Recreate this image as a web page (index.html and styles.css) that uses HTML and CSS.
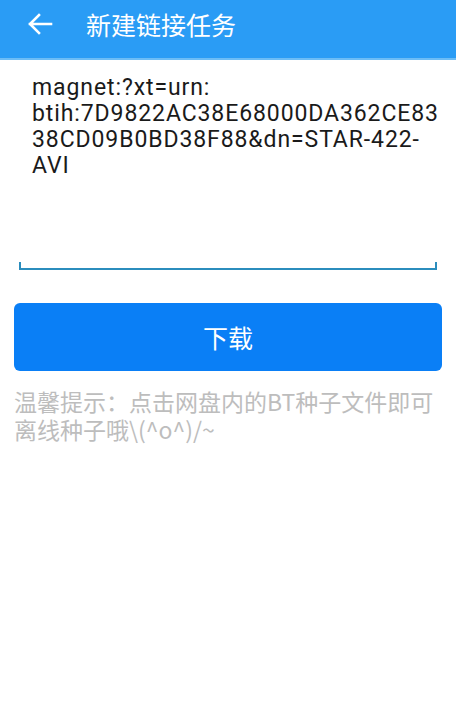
FILE: index.html
```html
<!DOCTYPE html>
<html lang="zh-CN">
<head>
<meta charset="utf-8">
<title>新建链接任务</title>
<link rel="stylesheet" href="styles.css">
</head>
<body>
<header class="appbar">
  <svg class="back" width="26" height="24" viewBox="0 0 26 24" aria-hidden="true">
    <path d="M24 12H3M12 3L3 12L12 21" fill="none" stroke="#fff" stroke-width="2.6" stroke-linecap="square"/>
  </svg>
  <h1 class="title">新建链接任务</h1>
</header>
<main class="content">
  <div class="field">
    <div class="field-text">magnet:?xt=urn:<br>btih:7D9822AC38E68000DA362CE83<br>38CD09B0BD38F88&amp;dn=STAR-422-<br>AVI</div>
    <div class="field-line"></div>
  </div>
  <button class="download">下载</button>
  <p class="hint">温馨提示：点击网盘内的BT种子文件即可<br>离线种子哦\(^o^)/~</p>
</main>
</body>
</html>
```
FILE: styles.css
```css
html, body {
  margin: 0;
  padding: 0;
  background: #ffffff;
}
body {
  width: 456px;
  height: 716px;
  font-family: Roboto, "Noto Sans CJK SC", sans-serif;
}
.appbar {
  height: 48px;
  padding-bottom: 10px;
  background: #2a9cf5;
  border-bottom: 2px solid #6cbdf6;
  display: flex;
  align-items: center;
  padding-left: 27px;
  box-sizing: content-box;
}
.back {
  display: block;
  flex: none;
}
.title {
  margin: 0 0 0 33px;
  color: #ffffff;
  font-size: 25px;
  font-weight: normal;
  line-height: 28px;
  font-family: "Noto Sans CJK SC", sans-serif;
}
.content {
  padding: 0 14px;
}
.field {
  padding: 15px 5px 0 5px;
}
.field-text {
  padding-left: 13px;
  font-size: 23px;
  letter-spacing: 0.9px;
  line-height: 26px;
  color: #1a1a1a;
  height: 187px;
  white-space: nowrap;
}
.field-line {
  height: 6px;
  border: 2px solid #2b8dbd;
  border-top: none;
}
.download {
  display: block;
  width: 100%;
  height: 68px;
  margin-top: 33px;
  border: none;
  border-radius: 6px;
  background: #0a7ff6;
  color: #ffffff;
  font-family: "Noto Sans CJK SC", sans-serif;
  font-size: 25px;
  padding: 0;
}
.hint {
  margin: 16px 0 0 0;
  color: #bdbdbd;
  font-size: 23px;
  line-height: 28px;
  white-space: nowrap;
  font-family: "Noto Sans CJK SC", sans-serif;
}
```
